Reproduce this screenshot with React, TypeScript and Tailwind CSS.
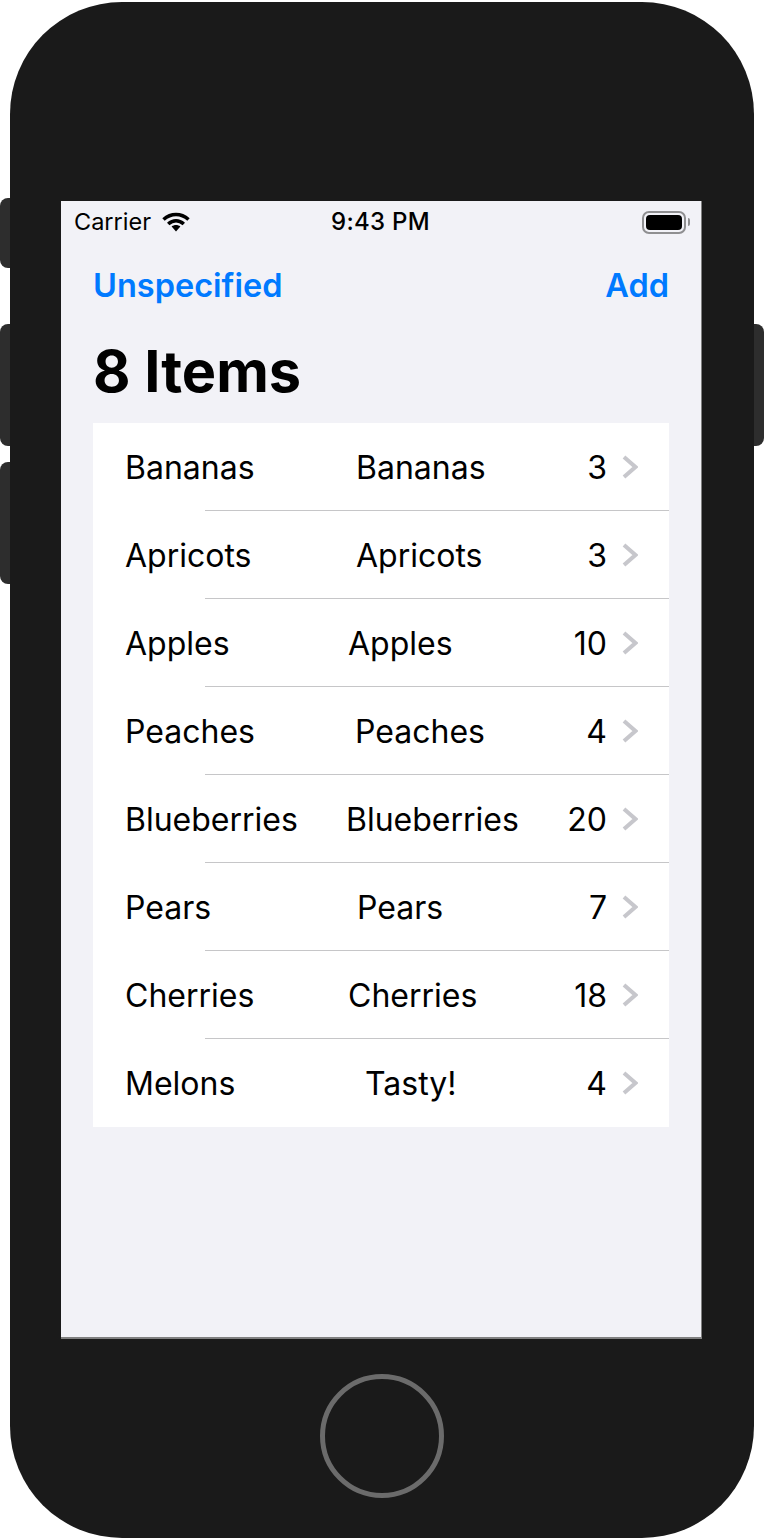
const items = [
  { name: 'Bananas', note: 'Bananas', count: 3, noteClass: 'pl-[10px]' },
  { name: 'Apricots', note: 'Apricots', count: 3, noteClass: 'pl-[10px]' },
  { name: 'Apples', note: 'Apples', count: 10, noteClass: 'pl-[2px]' },
  { name: 'Peaches', note: 'Peaches', count: 4, noteClass: 'pl-[9px]' },
  { name: 'Blueberries', note: 'Blueberries', count: 20, noteClass: 'pl-0' },
  { name: 'Pears', note: 'Pears', count: 7, noteClass: 'pl-[11px]' },
  { name: 'Cherries', note: 'Cherries', count: 18, noteClass: 'pl-[2px]' },
  { name: 'Melons', note: 'Tasty!', count: 4, noteClass: 'pl-[19px]' },
];

function Wifi() {
  return (
    <svg width="28" height="20" viewBox="0 0 28 20" fill="none" stroke="#000">
      <path d="M1.5 7.5C9 0.8 19 0.8 26.5 7.5" strokeWidth="3.6" />
      <path d="M6.2 12C11 7.8 17 7.8 21.8 12" strokeWidth="3.6" />
      <path d="M9.6 14.6L14 19.6L18.4 14.6C15.8 12.6 12.2 12.6 9.6 14.6Z" fill="#000" stroke="none" />
    </svg>
  );
}

function Battery() {
  return (
    <div className="flex items-center gap-[2px]">
      <div className="w-[44px] h-[23px] rounded-[7px] border-2 border-[#8f8f91] p-[2px]">
        <div className="w-full h-full rounded-[4px] bg-black" />
      </div>
      <div className="w-[2px] h-[8px] rounded-r-full bg-[#8f8f91]" />
    </div>
  );
}

function Chevron() {
  return (
    <svg className="-mt-[2px]" width="16" height="24" viewBox="0 0 16 24" fill="none" stroke="#c7c7cc" strokeWidth="4">
      <path d="M2 2L13.4 12L2 22" />
    </svg>
  );
}

export default function App() {
  return (
    <div className="relative w-[764px] h-[1540px] bg-white font-['Inter',sans-serif] overflow-hidden">
      {/* side buttons */}
      <div className="absolute left-0 top-[198px] w-[14px] h-[70px] rounded-l-lg bg-[#2d2d2d]" />
      <div className="absolute left-0 top-[324px] w-[14px] h-[122px] rounded-l-lg bg-[#2d2d2d]" />
      <div className="absolute left-0 top-[462px] w-[14px] h-[122px] rounded-l-lg bg-[#2d2d2d]" />
      <div className="absolute right-0 top-[324px] w-[14px] h-[122px] rounded-r-lg bg-[#2d2d2d]" />

      <div className="absolute left-[10px] top-[2px] w-[744px] h-[1536px] rounded-[112px] bg-[#1a1a1a] flex flex-col items-center pt-[199px]">
        {/* screen */}
        <div className="self-start ml-[51px] w-[641px] h-[1138px] bg-[#f2f2f7] border-r border-b-2 border-[#808080] flex flex-col text-black shrink-0">
          {/* status bar */}
          <div className="relative h-[42px] flex items-center justify-between pl-[13px] pr-[11px] shrink-0">
            <div className="flex items-center gap-[11px]">
              <span className="text-[23.5px] leading-none">Carrier</span>
              <Wifi />
            </div>
            <span className="absolute left-[270px] text-[24px] leading-none font-medium tracking-[0.3px]">9:43 PM</span>
            <Battery />
          </div>

          {/* nav bar */}
          <div className="flex justify-between pl-[32px] pr-[32px] pt-[23px] text-[#007aff] text-[32.5px] leading-[40px] font-semibold shrink-0">
            <span>Unspecified</span>
            <span>Add</span>
          </div>
          <h1 className="pl-[32px] pt-[31px] text-[57.7px] leading-[68px] font-bold shrink-0">8 Items</h1>

          {/* list */}
          <div className="mx-[32px] mt-[18px] bg-white flex flex-col">
            {items.map((item, i) => (
              <div key={item.name} className="relative h-[88px] flex items-center pl-[32px] pr-[31px] pt-[2px] text-[32px]">
                <span className="w-[221px] shrink-0">{item.name}</span>
                <span className={`flex-1 ${item.noteClass}`}>{item.note}</span>
                <span className="mr-[15px]">{item.count}</span>
                <Chevron />
                {i < items.length - 1 && (
                  <div className="absolute right-0 bottom-0 left-[112px] h-px bg-[#c6c6c8]" />
                )}
              </div>
            ))}
          </div>
        </div>

        {/* home button */}
        <div className="mt-[35px] w-[124px] h-[124px] rounded-full border-[5px] border-[#6b6b6b]" />
      </div>
    </div>
  );
}
